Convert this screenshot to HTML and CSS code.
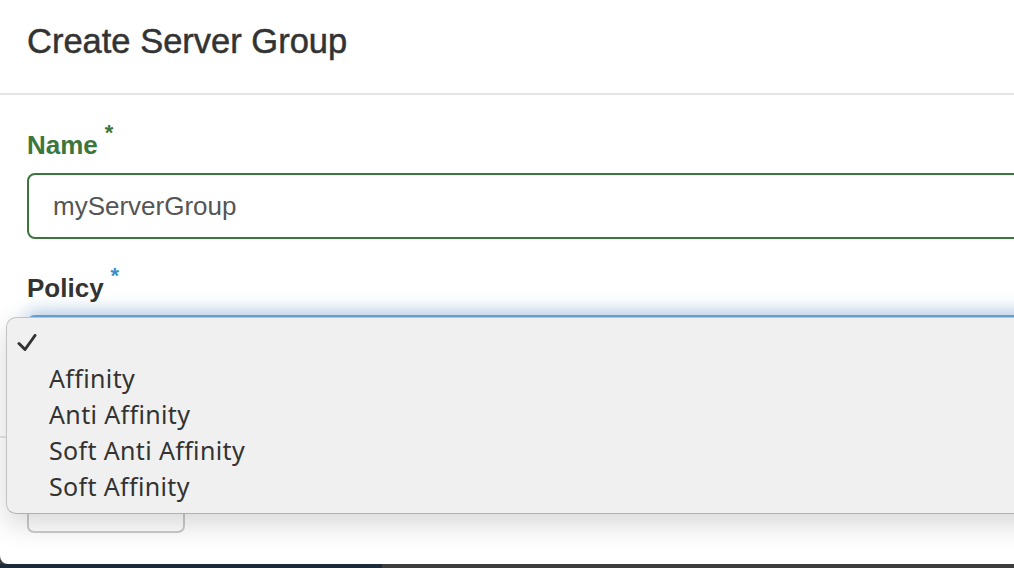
FILE: index.html
```html
<!DOCTYPE html>
<html lang="en">
<head>
    <meta charset="UTF-8">
    <meta name="viewport" content="width=device-width, initial-scale=1.0">
    <title>Create Server Group</title>
    <link rel="stylesheet" href="styles.css">
</head>
<body>

    <div class="modal">
        <div class="modal-header">
            <h1>Create Server Group</h1>
        </div>

        <form class="modal-body">
            <div class="form-group has-success">
                <label for="name">Name<span class="required">*</span></label>
                <input type="text" id="name" class="form-control" value="myServerGroup">
            </div>

            <div class="form-group">
                <label for="policy">Policy<span class="required required-blue">*</span></label>
                <div class="form-control select-focused" id="policy"></div>
            </div>
        </form>

        <div class="modal-footer">
            <button type="button" class="btn">Cancel</button>
        </div>

        <ul class="select-menu">
            <li class="selected">
                <svg class="check" width="20" height="18" viewBox="0 0 20 18">
                    <polyline points="2,9.5 8,15.5 18,1.5" fill="none" stroke="#333" stroke-width="3" stroke-linecap="round" stroke-linejoin="round"/>
                </svg>
            </li>
            <li>Affinity</li>
            <li>Anti Affinity</li>
            <li>Soft Anti Affinity</li>
            <li>Soft Affinity</li>
        </ul>
    </div>

    <div class="backdrop">
        <div class="sidebar">Server Groups</div>
        <div class="main"></div>
    </div>

</body>
</html>
```

FILE: styles.css
```css
body {
    margin: 0;
    overflow: hidden;
    font-family: "Liberation Sans", Arial, sans-serif;
    background-color: #3d3d3d;
}
.modal {
    position: relative;
    width: 1080px;
    height: 564px;
    background-color: #fff;
    border-bottom-left-radius: 8px;
    overflow: hidden;
}
.modal-header {
    height: 95px;
    box-sizing: border-box;
    padding: 22px 27px 0;
    border-bottom: 2px solid #e5e5e5;
}
.modal-header h1 {
    margin: 0;
    font-size: 34.5px;
    line-height: 38px;
    font-weight: normal;
    color: #333;
    -webkit-text-stroke: 0.5px #333;
}
.modal-body {
    height: 341px;
    box-sizing: border-box;
    padding: 27px 27px 0;
}
.form-group {
    margin-bottom: 26px;
}
label {
    display: block;
    font-size: 26px;
    line-height: 30px;
    font-weight: bold;
    color: #333;
    margin-bottom: 13px;
}
.required {
    display: inline-block;
    margin-left: 7px;
    font-size: 22px;
    line-height: 1;
    vertical-align: 14px;
}
.required-blue {
    color: #428bca;
}
.has-success label {
    color: #3c763d;
}
.form-control {
    display: block;
    width: 100%;
    height: 66px;
    box-sizing: border-box;
    padding: 0 24px;
    border: 2px solid #ccc;
    border-radius: 8px;
    font-family: "Liberation Sans", Arial, sans-serif;
    font-size: 26px;
    color: #555;
    background-color: #fff;
}
.has-success .form-control {
    border-color: #3c763d;
}
.select-focused {
    margin-top: -1px;
    border-color: #66a3dc;
    box-shadow: 0 -4px 18px rgba(102, 155, 210, 0.45);
}
.modal-footer {
    border-top: 2px solid #e5e5e5;
    padding: 27px 27px 0;
}
.btn {
    width: 158px;
    height: 68px;
    border: 2px solid #ccc;
    border-radius: 7px;
    background-color: #fff;
    font-size: 24px;
    color: #333;
}
.select-menu {
    position: absolute;
    left: 6px;
    top: 317px;
    width: 1060px;
    height: 197px;
    box-sizing: border-box;
    margin: 0;
    padding: 6px 0 0 42px;
    list-style: none;
    background-color: #f0f0f0;
    border: 1px solid #c2c2c2;
    border-bottom-color: #b0b0b0;
    border-radius: 10px;
    box-shadow: 0 10px 28px rgba(0, 0, 0, 0.16);
    font-family: "Noto Sans", sans-serif;
    font-size: 25px;
    letter-spacing: 0.35px;
    color: #333;
}
.select-menu li {
    height: 36px;
    line-height: 36px;
}
.select-menu .selected {
    position: relative;
}
.check {
    position: absolute;
    left: -32px;
    top: 10px;
}
.backdrop {
    display: flex;
    height: 40px;
}
.sidebar {
    width: 382px;
    box-sizing: border-box;
    padding-left: 185px;
    background-color: #1c2b3a;
    color: #9aa3ad;
    font-size: 30px;
    line-height: 30px;
}
.main {
    flex: 1;
    background-color: #3d3d3d;
}
```
